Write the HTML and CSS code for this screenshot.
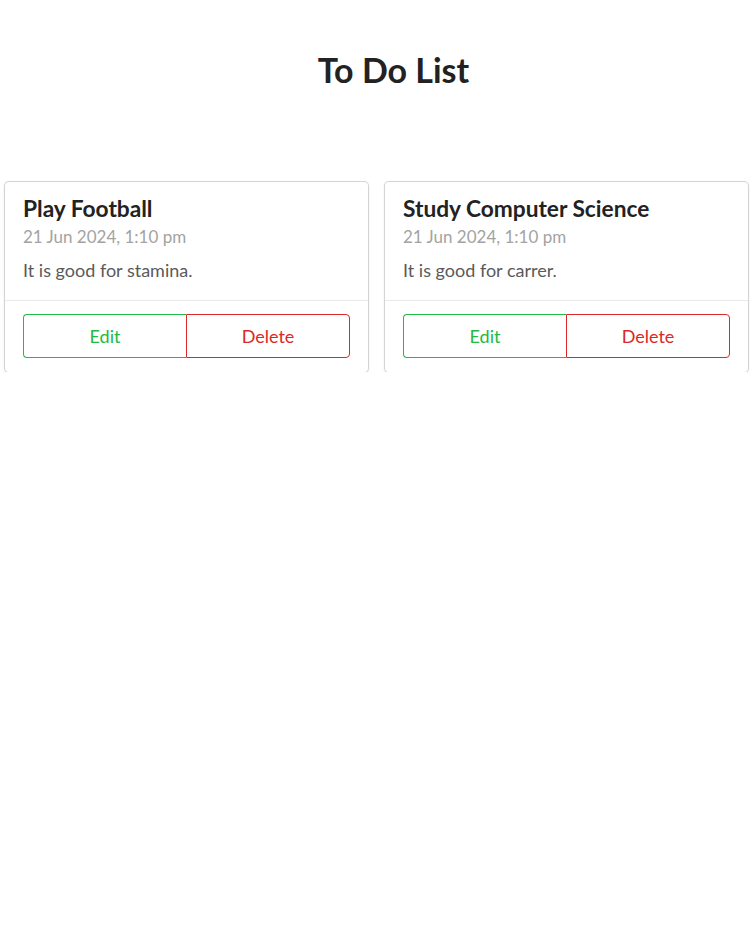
FILE: index.html
```html
<!DOCTYPE html>
<html lang="en">
<head>
<meta charset="utf-8">
<title>To Do List</title>
<link rel="stylesheet" href="styles.css">
</head>
<body>
<main class="page">
  <h1 class="page-title">To Do List</h1>
  <section class="cards">
    <article class="card">
      <div class="card-content">
        <h2 class="card-header">Play Football</h2>
        <div class="card-meta">21 Jun 2024, 1:10 pm</div>
        <p class="card-desc">It is good for stamina.</p>
      </div>
      <div class="card-extra">
        <div class="btn-group">
          <button class="btn btn-edit">Edit</button>
          <button class="btn btn-delete">Delete</button>
        </div>
      </div>
    </article>
    <article class="card">
      <div class="card-content">
        <h2 class="card-header">Study Computer Science</h2>
        <div class="card-meta">21 Jun 2024, 1:10 pm</div>
        <p class="card-desc">It is good for carrer.</p>
      </div>
      <div class="card-extra">
        <div class="btn-group">
          <button class="btn btn-edit">Edit</button>
          <button class="btn btn-delete">Delete</button>
        </div>
      </div>
    </article>
  </section>
</main>
</body>
</html>
```
FILE: styles.css
```css
* { box-sizing: border-box; }
html, body { margin: 0; padding: 0; background: #fff; }
body {
  font-family: Lato, "Open Sans", "Liberation Sans", sans-serif;
  font-size: 18px;
  color: rgba(0,0,0,.87);
}
.page { padding: 0 5px; }
.page-title {
  margin: 0;
  padding: 48px 0 0 34px;
  height: 182px;
  text-align: center;
  font-size: 34px;
  font-weight: 700;
  line-height: 44px;
  color: #222;
}
.cards {
  display: grid;
  grid-template-columns: 1fr 1fr;
  column-gap: 17px;
}
.card {
  background: #fff;
  border-radius: 4px;
  box-shadow: 0 1px 3px 0 #d4d4d5, 0 0 0 1px #d4d4d5;
  display: flex;
  flex-direction: column;
}
.card-content {
  padding: 13px 18px 18px;
}
.card-header {
  margin: 0;
  font-size: 22.7px;
  font-weight: 700;
  line-height: 28px;
  color: #222;
}
.card-meta {
  margin-top: 3px;
  font-size: 17px;
  line-height: 22px;
  color: #a3a3a3;
}
.card-desc {
  margin: 10px 0 0;
  font-size: 18px;
  line-height: 24px;
  color: #5a5a5a;
}
.card-extra {
  border-top: 1px solid rgba(34,36,38,.1);
  padding: 13px 18px 14px;
}
.btn-group { display: flex; }
.btn {
  flex: 1 1 0;
  height: 44px;
  background: #fff;
  font-family: inherit;
  font-size: 18px;
  cursor: pointer;
  padding: 0;
}
.btn-edit {
  color: #21ba45;
  border: 1px solid #21ba45;
  border-right: none;
  border-radius: 4px 0 0 4px;
}
.btn-delete {
  color: #db2828;
  border: 1px solid #db2828;
  border-radius: 0 4px 4px 0;
}
```
